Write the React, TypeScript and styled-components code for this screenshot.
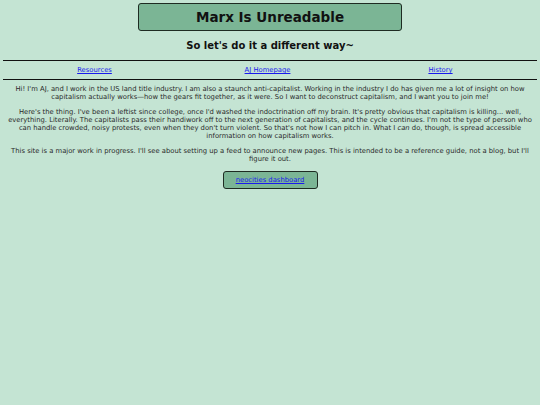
import styled, { createGlobalStyle } from "styled-components"

const GlobalStyle = createGlobalStyle`
    html, body {
        margin: 0;
        padding: 0;
        background: #c4e4d3;
    }
    body {
        font-family: "DejaVu Sans", Verdana, sans-serif;
        color: #222;
    }
    a {
        color: #1a1aee;
    }
`

const links = ["Resources", "AJ Homepage", "History"]

function App() {
    return (
        <>
            <GlobalStyle />
            <Page>
                <TitleBox>
                    <Title>Marx Is Unreadable</Title>
                </TitleBox>
                <Subtitle>So let's do it a different way~</Subtitle>
                <Nav>
                    {links.map((l) => (
                        <NavItem key={l}>
                            <a href="#">{l}</a>
                        </NavItem>
                    ))}
                </Nav>
                <Body>
                    <Para>
                        Hi! I'm AJ, and I work in the US land title industry. I am also a staunch anti-capitalist. Working in the industry I do has given me a lot of insight on how capitalism actually works—how the gears fit together, as it were. So I want to deconstruct capitalism, and I want you to join me!
                    </Para>
                    <Para>
                        Here's the thing. I've been a leftist since college, once I'd washed the indoctrination off my brain. It's pretty obvious that capitalism is killing... well, everything. Literally. The capitalists pass their handiwork off to the next generation of capitalists, and the cycle continues. I'm not the type of person who can handle crowded, noisy protests, even when they don't turn violent. So that's not how I can pitch in. What I <em>can</em> do, though, is spread accessible information on how capitalism works.
                    </Para>
                    <Para>
                        This site is a major work in progress. I'll see about setting up a feed to announce new pages. This is intended to be a reference guide, not a blog, but I'll figure it out.
                    </Para>
                    <Button>
                        <a href="#">neocities dashboard</a>
                    </Button>
                </Body>
            </Page>
        </>
    )
}

export default App

const Page = styled.div`
    width: 540px;
    min-height: 405px;
    padding: 3px 3px 0;
    box-sizing: border-box;
    display: flex;
    flex-direction: column;
    align-items: center;
`

const TitleBox = styled.div`
    width: 264px;
    height: 28px;
    box-sizing: border-box;
    background: #7bb595;
    border: 1.5px solid #1e2b22;
    border-radius: 3px;
    display: flex;
    align-items: center;
    justify-content: center;
`

const Title = styled.h1`
    margin: 0;
    font-size: 13.5px;
    font-weight: bold;
    color: #111;
`

const Subtitle = styled.h2`
    margin: 9px 0 0;
    height: 12px;
    line-height: 12px;
    font-size: 10px;
    font-weight: bold;
    color: #111;
`

const Nav = styled.div`
    width: 100%;
    margin-top: 8px;
    box-sizing: border-box;
    border-top: 1.5px solid #111;
    border-bottom: 1.5px solid #111;
    padding: 0 10px 0 5px;
    height: 20px;
    display: grid;
    grid-template-columns: repeat(3, 1fr);
    align-items: center;
`

const NavItem = styled.div`
    text-align: center;
    font-size: 6.8px;
`

const Body = styled.div`
    width: 100%;
    padding: 5px 3px 0;
    box-sizing: border-box;
    display: flex;
    flex-direction: column;
    align-items: center;
`

const Para = styled.p`
    margin: 0 0 7px;
    font-size: 6.8px;
    line-height: 8px;
    text-align: center;
    color: #2a2a2a;
`

const Button = styled.div`
    margin-top: 1px;
    width: 95px;
    height: 18px;
    box-sizing: border-box;
    background: #7bb595;
    border: 1.5px solid #1e2b22;
    border-radius: 3px;
    display: flex;
    align-items: center;
    justify-content: center;
    font-size: 6.8px;
`
